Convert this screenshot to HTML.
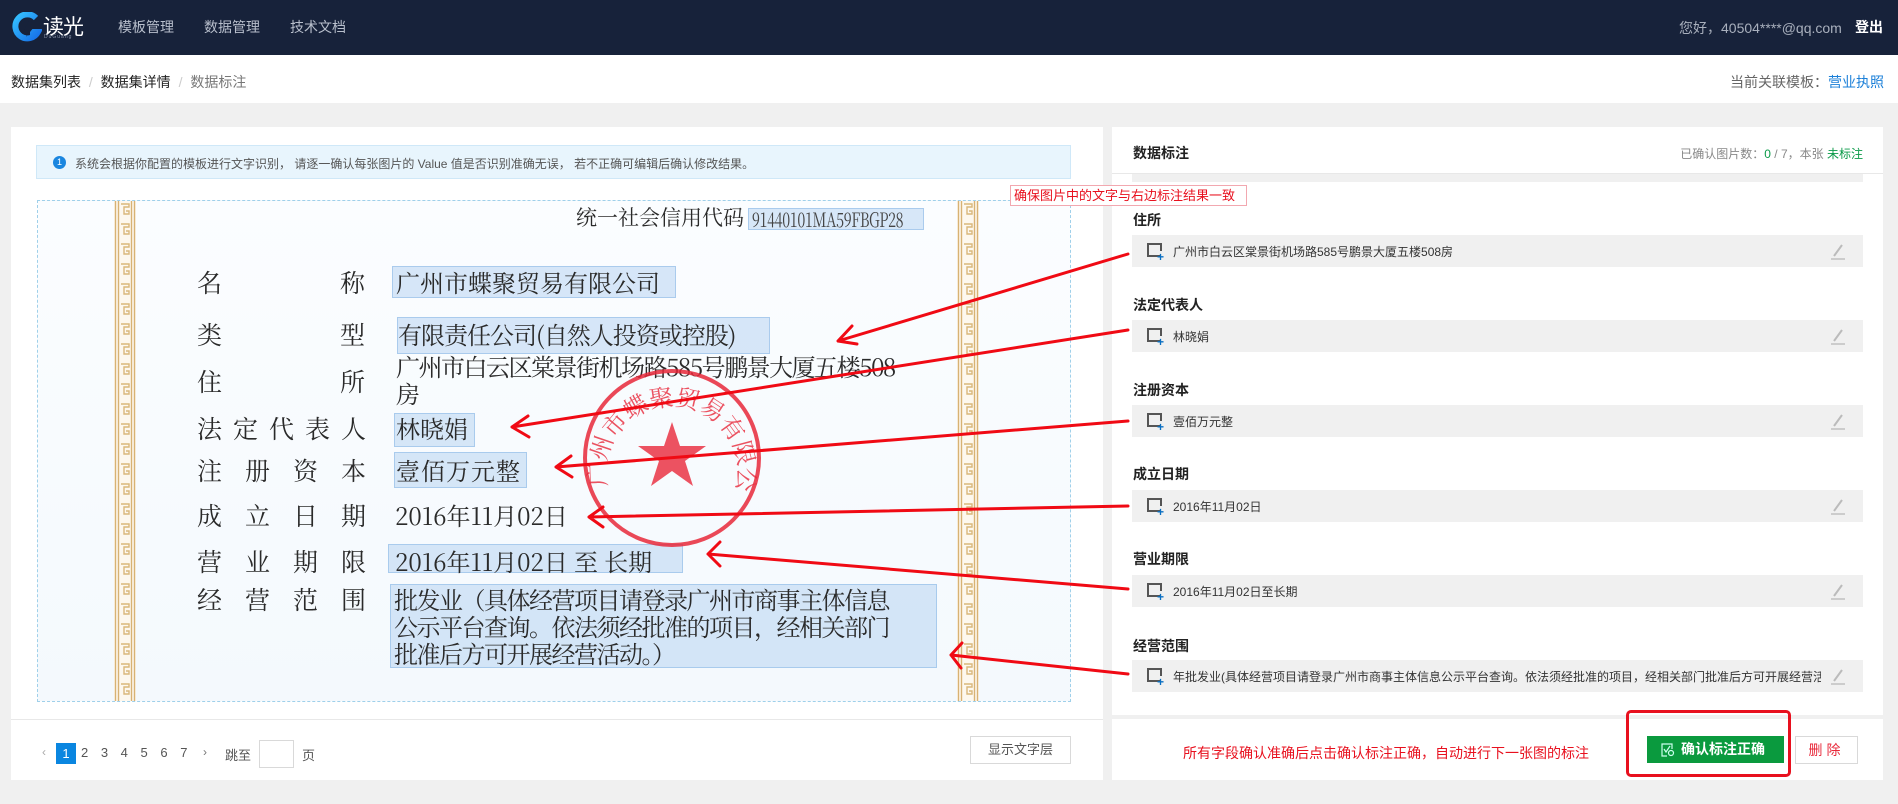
<!DOCTYPE html>
<html><head><meta charset="utf-8">
<style>
*{margin:0;padding:0;box-sizing:border-box}
body{width:1898px;height:804px;overflow:hidden;background:#f0f0f0;font-family:"Liberation Sans","Noto Sans CJK SC",sans-serif;position:relative;color:#333}
.a{position:absolute;white-space:nowrap}
.nav{left:0;top:0;width:1898px;height:55px;background:#17223a}
.crumb{left:0;top:55px;width:1898px;height:48px;background:#fff}
.panel{background:#fff}
.cert{font-family:"Noto Serif CJK SC","Liberation Serif",serif;color:#2a2a2a;font-size:24px;line-height:1}
.vb{background:rgba(170,205,240,.45);border:1px solid rgba(140,185,230,.6)}
.lbl{font-size:14px;font-weight:bold;color:#222}
.fld{left:1132px;width:731px;height:32px;background:#f0f0f0}
.fld .ic{position:absolute;left:15px;top:8px;width:13px;height:14px;border:2px solid #555;border-right:none}
.fld .ic:after{content:"";position:absolute;right:-2px;top:-2px;width:2px;height:8px;background:#555}
.fld .pl{position:absolute;left:25px;top:16px;color:#0a6fc2;font-size:12px;font-weight:bold;line-height:1}
.fld .t{position:absolute;left:41px;top:8px;font-size:12px;color:#333;width:650px;overflow:hidden;white-space:nowrap}
.fld .pen{position:absolute;right:16px;top:7px}
</style></head><body>

<div class="a nav"></div>
<svg class="a" style="left:12px;top:12px" width="30" height="32" viewBox="0 0 30 32">
<defs><linearGradient id="g" x1="0" y1="0" x2="1" y2="1"><stop offset="0" stop-color="#35c2ff"/><stop offset="1" stop-color="#1670e8"/></linearGradient></defs>
<path d="M24 6 A12 12 0 1 0 26 20 L18 20" fill="none" stroke="url(#g)" stroke-width="6"/>
<path d="M17 9 L12 18 L17 18 L14 25 L22 15 L17 15 L20 9Z" fill="#17223a"/>
</svg>
<div class="a" style="left:43px;top:11px;color:#fff;font-size:21px;letter-spacing:-1px">读光</div>
<div class="a" style="left:44px;top:34px;color:#8c96aa;font-size:5px;letter-spacing:1px">DuGuang</div>
<div class="a" style="left:118px;top:17px;color:#b8bfcc;font-size:14px">模板管理</div>
<div class="a" style="left:204px;top:17px;color:#b8bfcc;font-size:14px">数据管理</div>
<div class="a" style="left:290px;top:17px;color:#b8bfcc;font-size:14px">技术文档</div>
<div class="a" style="left:1679px;top:18px;color:#a9b0bd;font-size:14px">您好，40504****@qq.com</div>
<div class="a" style="left:1855px;top:17px;color:#fff;font-size:14px;font-weight:bold">登出</div>

<div class="a crumb"></div>
<div class="a" style="left:11px;top:72px;font-size:14px;color:#222">数据集列表 <span style="color:#ccc;margin:0 4px">/</span> 数据集详情 <span style="color:#ccc;margin:0 4px">/</span> <span style="color:#777">数据标注</span></div>
<div class="a" style="left:1730px;top:72px;font-size:14px;color:#666">当前关联模板：<span style="color:#1a7fd8">营业执照</span></div>

<div class="a panel" style="left:11px;top:127px;width:1092px;height:653px"></div>
<div class="a" style="left:36px;top:145px;width:1035px;height:34px;background:#e8f5fd;border:1px solid #cfe8f8"></div>
<div class="a" style="left:53px;top:156px;width:13px;height:13px;border-radius:50%;background:#1a86df;color:#fff;font-size:9px;text-align:center;line-height:13px">1</div>
<div class="a" style="left:75px;top:155px;font-size:12px;color:#555">系统会根据你配置的模板进行文字识别， 请逐一确认每张图片的 Value 值是否识别准确无误， 若不正确可编辑后确认修改结果。</div>

<div class="a" style="left:37px;top:200px;width:1034px;height:502px;background:linear-gradient(180deg,#fbfdff,#f4f9fd);border:1px dashed #9fd0ea"></div>
<svg class="a" style="left:114px;top:201px" width="22" height="500">
<defs><pattern id="k" width="22" height="20" patternUnits="userSpaceOnUse">
<path d="M7 3 H15 V6 H10 V13 H15 V10 H12" fill="none" stroke="#d9b77a" stroke-width="1.4"/></pattern></defs>
<rect width="22" height="500" fill="#fdf8ee"/><rect width="22" height="500" fill="url(#k)"/>
<path d="M1.5 0V500M4.5 0V500M17.5 0V500M20.5 0V500" stroke="#d7b274" stroke-width="1.4"/></svg>
<svg class="a" style="left:957px;top:201px" width="22" height="500">
<rect width="22" height="500" fill="#fdf8ee"/><rect width="22" height="500" fill="url(#k)"/>
<path d="M1.5 0V500M4.5 0V500M17.5 0V500M20.5 0V500" stroke="#d7b274" stroke-width="1.4"/></svg>

<div class="a cert" style="left:576px;top:207px;font-size:21px">统一社会信用代码</div>
<div class="a vb" style="left:748px;top:208px;width:176px;height:22px"></div>
<div class="a cert" style="left:752px;top:209px;font-size:20px;color:#444;transform:scaleX(.72);transform-origin:0 0;letter-spacing:-0.5px">91440101MA59FBGP28</div>

<div class="a vb" style="left:392px;top:266px;width:284px;height:32px"></div>
<div class="a vb" style="left:397px;top:317px;width:373px;height:37px"></div>
<div class="a vb" style="left:394px;top:413px;width:81px;height:34px"></div>
<div class="a vb" style="left:394px;top:452px;width:133px;height:36px"></div>
<div class="a vb" style="left:388px;top:544px;width:295px;height:29px"></div>
<div class="a vb" style="left:390px;top:584px;width:547px;height:84px"></div>

<div class="a cert" style="left:197px;top:270px;font-size:25px">名</div><div class="a cert" style="left:340px;top:270px;font-size:25px">称</div>
<div class="a cert" style="left:197px;top:322px;font-size:25px">类</div><div class="a cert" style="left:340px;top:322px;font-size:25px">型</div>
<div class="a cert" style="left:197px;top:369px;font-size:25px">住</div><div class="a cert" style="left:340px;top:369px;font-size:25px">所</div>
<div class="a cert" style="left:197px;top:416px;font-size:25px;letter-spacing:11px">法定代表人</div>
<div class="a cert" style="left:197px;top:458px;font-size:25px;letter-spacing:23px">注册资本</div>
<div class="a cert" style="left:197px;top:503px;font-size:25px;letter-spacing:23px">成立日期</div>
<div class="a cert" style="left:197px;top:549px;font-size:25px;letter-spacing:23px">营业期限</div>
<div class="a cert" style="left:197px;top:587px;font-size:25px;letter-spacing:23px">经营范围</div>

<div class="a cert" style="left:396px;top:270px">广州市蝶聚贸易有限公司</div>
<div class="a cert" style="left:398px;top:322px;letter-spacing:-1px">有限责任公司(自然人投资或控股)</div>
<div class="a cert" style="left:396px;top:354px;letter-spacing:-1.5px">广州市白云区棠景街机场路585号鹏景大厦五楼508</div>
<div class="a cert" style="left:396px;top:381px">房</div>
<div class="a cert" style="left:396px;top:416px">林晓娟</div>
<div class="a cert" style="left:396px;top:458px;letter-spacing:1px">壹佰万元整</div>
<div class="a cert" style="left:395px;top:503px">2016年11月02日</div>
<div class="a cert" style="left:395px;top:549px">2016年11月02日 至 长期</div>
<div class="a cert" style="left:394px;top:587px;letter-spacing:-1.5px">批发业（具体经营项目请登录广州市商事主体信息</div>
<div class="a cert" style="left:394px;top:614px;letter-spacing:-1.5px">公示平台查询。依法须经批准的项目，经相关部门</div>
<div class="a cert" style="left:394px;top:641px;letter-spacing:-1.5px">批准后方可开展经营活动。）</div>

<svg class="a" style="left:580px;top:366px" width="184" height="184" viewBox="0 0 184 184">
<defs><path id="arc" d="M28 122 A66 66 0 1 1 156 122"/></defs>
<circle cx="92" cy="92" r="87" fill="none" stroke="#e8283a" stroke-width="4" opacity=".85"/>
<text font-family="Noto Serif CJK SC,serif" font-size="24" fill="#e8283a" opacity=".8"><textPath href="#arc" startOffset="2">广州市蝶聚贸易有限公司</textPath></text>
<polygon points="92,56 100,80 126,80 105,95 113,120 92,105 71,120 79,95 58,80 84,80" fill="#e8283a" opacity=".8"/>
</svg>

<div class="a" style="left:11px;top:719px;width:1092px;height:1px;background:#e8e8e8"></div>
<div class="a" style="left:42px;top:745px;font-size:12px;color:#aaa">‹</div>
<div class="a" style="left:56px;top:743px;width:20px;height:21px;background:#0a86e0;color:#fff;font-size:13px;text-align:center;line-height:21px">1</div>
<div class="a" style="left:81px;top:745px;font-size:13px;color:#555;word-spacing:9px">2 3 4 5 6 7</div>
<div class="a" style="left:203px;top:745px;font-size:12px;color:#777">›</div>
<div class="a" style="left:225px;top:745px;font-size:13px;color:#555">跳至</div>
<div class="a" style="left:259px;top:740px;width:35px;height:28px;border:1px solid #d9d9d9;background:#fff"></div>
<div class="a" style="left:302px;top:745px;font-size:13px;color:#555">页</div>
<div class="a" style="left:970px;top:736px;width:101px;height:28px;border:1px solid #d9d9d9;font-size:13px;color:#555;text-align:center;line-height:26px">显示文字层</div>

<div class="a panel" style="left:1112px;top:127px;width:771px;height:588px"></div>
<div class="a" style="left:1133px;top:143px;font-size:14px;font-weight:bold;color:#222">数据标注</div>
<div class="a" style="right:35px;top:145px;font-size:12px;color:#888">已确认图片数：<span style="color:#0a9a48">0</span> / 7，本张 <span style="color:#0a9a48">未标注</span></div>
<div class="a" style="left:1132px;top:174px;width:731px;height:8px;background:#f0f0f0"></div>
<div class="a" style="left:1112px;top:173px;width:771px;height:1px;background:#e8e8e8"></div>

<div class="a lbl" style="left:1133px;top:210px">住所</div>
<div class="a fld" style="top:235px"><div class="ic"></div><div class="pl">+</div><div class="t">广州市白云区棠景街机场路585号鹏景大厦五楼508房</div><svg class="pen" width="18" height="18"><path d="M5 14 L13 3" stroke="#bbb" stroke-width="2"/><path d="M2 17H16" stroke="#ccc" stroke-width="2"/></svg></div>
<div class="a lbl" style="left:1133px;top:295px">法定代表人</div>
<div class="a fld" style="top:320px"><div class="ic"></div><div class="pl">+</div><div class="t">林晓娟</div><svg class="pen" width="18" height="18"><path d="M5 14 L13 3" stroke="#bbb" stroke-width="2"/><path d="M2 17H16" stroke="#ccc" stroke-width="2"/></svg></div>
<div class="a lbl" style="left:1133px;top:380px">注册资本</div>
<div class="a fld" style="top:405px"><div class="ic"></div><div class="pl">+</div><div class="t">壹佰万元整</div><svg class="pen" width="18" height="18"><path d="M5 14 L13 3" stroke="#bbb" stroke-width="2"/><path d="M2 17H16" stroke="#ccc" stroke-width="2"/></svg></div>
<div class="a lbl" style="left:1133px;top:464px">成立日期</div>
<div class="a fld" style="top:490px"><div class="ic"></div><div class="pl">+</div><div class="t">2016年11月02日</div><svg class="pen" width="18" height="18"><path d="M5 14 L13 3" stroke="#bbb" stroke-width="2"/><path d="M2 17H16" stroke="#ccc" stroke-width="2"/></svg></div>
<div class="a lbl" style="left:1133px;top:549px">营业期限</div>
<div class="a fld" style="top:575px"><div class="ic"></div><div class="pl">+</div><div class="t">2016年11月02日至长期</div><svg class="pen" width="18" height="18"><path d="M5 14 L13 3" stroke="#bbb" stroke-width="2"/><path d="M2 17H16" stroke="#ccc" stroke-width="2"/></svg></div>
<div class="a lbl" style="left:1133px;top:636px">经营范围</div>
<div class="a fld" style="top:660px"><div class="ic"></div><div class="pl">+</div><div class="t" style="width:648px">年批发业(具体经营项目请登录广州市商事主体信息公示平台查询。依法须经批准的项目，经相关部门批准后方可开展经营活动。)</div><svg class="pen" width="18" height="18"><path d="M5 14 L13 3" stroke="#bbb" stroke-width="2"/><path d="M2 17H16" stroke="#ccc" stroke-width="2"/></svg></div>

<div class="a panel" style="left:1112px;top:719px;width:771px;height:61px"></div>
<div class="a" style="left:1183px;top:743px;font-size:14px;color:#e8101e">所有字段确认准确后点击确认标注正确，自动进行下一张图的标注</div>
<div class="a" style="left:1647px;top:736px;width:137px;height:27px;background:#0a9a3e;color:#fff;font-size:14px;font-weight:bold;line-height:27px;padding-left:34px">确认标注正确</div>
<svg class="a" style="left:1661px;top:743px" width="14" height="14"><path d="M11 6V1H1V13H6" fill="none" stroke="#cfe" stroke-width="1.2"/><path d="M3 6L5 9L9 3" fill="none" stroke="#cfe" stroke-width="1.2"/><circle cx="10" cy="10" r="2.5" fill="none" stroke="#cfe" stroke-width="1.2"/></svg>
<div class="a" style="left:1795px;top:736px;width:63px;height:28px;border:1px solid #d9d9d9;color:#e8283a;font-size:14px;text-align:center;line-height:26px;letter-spacing:4px">删除</div>
<div class="a" style="left:1626px;top:710px;width:165px;height:67px;border:3px solid #e8101e;border-radius:5px"></div>

<div class="a" style="left:1010px;top:185px;width:237px;height:21px;border:1px solid #f2a8b0;background:#fff;color:#e8101e;font-size:13px;line-height:19px;padding-left:3px">确保图片中的文字与右边标注结果一致</div>
<svg class="a" style="left:0;top:0" width="1898" height="804">
<g stroke="#f00a14" stroke-width="3" fill="none" stroke-linecap="round">
<path d="M1128 254L838 341M838 341L852 326M838 341L857 344"/>
<path d="M1128 330L512 427M512 427L528 416M512 427L529 437"/>
<path d="M1128 421L556 467M556 467L571 456M556 467L572 477"/>
<path d="M1128 506L589 517M589 517L603 507M589 517L603 527"/>
<path d="M1128 589L708 554M708 554L720 542M708 554L720 566"/>
<path d="M1128 674L951 655M951 655L962 643M951 655L961 668"/>
</g></svg>
</body></html>
